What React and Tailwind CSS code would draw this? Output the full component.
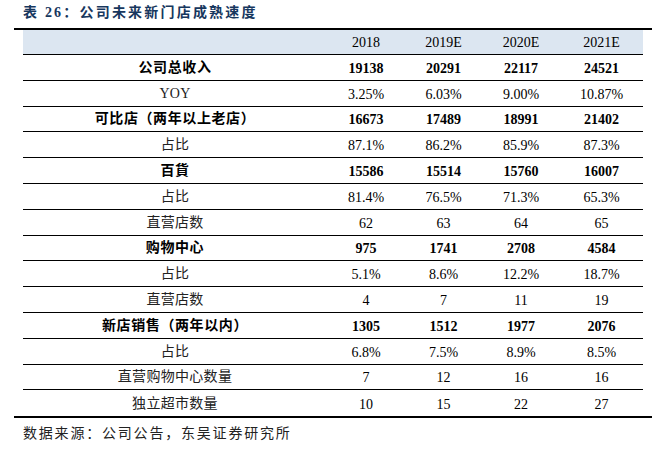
const rows = [
  { label: "公司总收入", bold: true, v: ["19138", "20291", "22117", "24521"] },
  { label: "YOY", v: ["3.25%", "6.03%", "9.00%", "10.87%"] },
  { label: "可比店（两年以上老店）", bold: true, v: ["16673", "17489", "18991", "21402"] },
  { label: "占比", v: ["87.1%", "86.2%", "85.9%", "87.3%"] },
  { label: "百貨", bold: true, v: ["15586", "15514", "15760", "16007"] },
  { label: "占比", v: ["81.4%", "76.5%", "71.3%", "65.3%"] },
  { label: "直营店数", v: ["62", "63", "64", "65"] },
  { label: "购物中心", bold: true, v: ["975", "1741", "2708", "4584"] },
  { label: "占比", v: ["5.1%", "8.6%", "12.2%", "18.7%"] },
  { label: "直营店数", v: ["4", "7", "11", "19"] },
  { label: "新店销售（两年以内）", bold: true, v: ["1305", "1512", "1977", "2076"] },
  { label: "占比", v: ["6.8%", "7.5%", "8.9%", "8.5%"] },
  { label: "直营购物中心数量", v: ["7", "12", "16", "16"] },
  { label: "独立超市数量", v: ["10", "15", "22", "27"] },
];

const years = ["2018", "2019E", "2020E", "2021E"];

const App = () => {
  return (
    <div className="w-[665px] h-[452px] bg-white text-black font-['Liberation_Serif','Noto_Sans_CJK_SC',serif]">
      {/* title */}
      <div className="h-[28px] pl-[23px] pt-[4px] text-[14px] leading-[17px] font-bold text-[#17375e] tracking-[2.2px]">
        表 26：公司未来新门店成熟速度
      </div>

      <div className="ml-[14px] w-[638px] border-t-2 border-b-2 border-black px-[9px]">
        <div className="grid grid-cols-[304px_78px_77px_78px_83px] h-[25px] bg-[#dce6f1] border-b border-black items-center text-[14px]">
          <div></div>
          {years.map((y) => (
            <div key={y} className="text-center">{y}</div>
          ))}
        </div>

        {rows.map((r, i) => (
          <div
            key={i}
            className={
              "grid grid-cols-[304px_78px_77px_78px_83px] h-[25.8px] items-center text-[14px] " +
              (i < rows.length - 1 ? "border-b border-black" : "")
            }
          >
            <div
              className={
                "text-center " +
                (r.bold ? "font-bold tracking-[0.6px]" : "text-[#222] tracking-[0.3px]")
              }
            >
              {r.label}
            </div>
            {r.v.map((x, j) => (
              <div key={j} className={"text-center pt-[2px] " + (r.bold ? "font-bold" : "")}>
                {x}
              </div>
            ))}
          </div>
        ))}
      </div>

      <div className="mt-[6px] pl-[23px] text-[14px] leading-[20px] tracking-[1.8px] text-[#222]">
        数据来源：公司公告，东吴证券研究所
      </div>
    </div>
  );
};

export default App;
